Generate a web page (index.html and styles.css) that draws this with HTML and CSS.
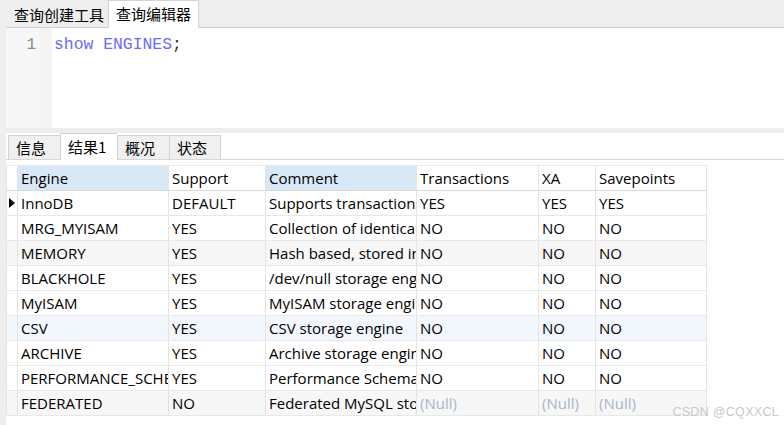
FILE: index.html
```html
<!DOCTYPE html>
<html lang="zh">
<head>
<meta charset="utf-8">
<link rel="stylesheet" href="styles.css">
</head>
<body>
<div class="app">
  <div class="qtabs">
    <div class="qtab">查询创建工具</div>
    <div class="qtab active">查询编辑器</div>
  </div>
  <div class="editor">
    <div class="gutter"><span class="ln">1</span></div>
    <div class="fold"></div>
    <div class="code"><span class="kw">show ENGINES</span><span class="punc">;</span></div>
  </div>
  <div class="split"></div>
  <div class="rtabs">
    <div class="rtab">信息</div>
    <div class="rtab active">结果1</div>
    <div class="rtab">概况</div>
    <div class="rtab">状态</div>
  </div>
  <div class="gridwrap">
    <table class="grid">
      <colgroup>
        <col class="c-ind"><col class="c-eng"><col class="c-sup"><col class="c-com"><col class="c-tra"><col class="c-xa"><col class="c-sav">
      </colgroup>
      <thead>
        <tr><th class="ind"></th><th class="sel">Engine</th><th>Support</th><th class="sel">Comment</th><th>Transactions</th><th>XA</th><th>Savepoints</th></tr>
      </thead>
      <tbody>
        <tr><td class="ind"><span class="arrow"></span></td><td>InnoDB</td><td>DEFAULT</td><td>Supports transactions, row-level locking, and foreign keys</td><td>YES</td><td>YES</td><td>YES</td></tr>
        <tr><td class="ind"></td><td>MRG_MYISAM</td><td>YES</td><td>Collection of identical MyISAM tables</td><td>NO</td><td>NO</td><td>NO</td></tr>
        <tr class="gray"><td class="ind"></td><td>MEMORY</td><td>YES</td><td>Hash based, stored in memory, useful for temporary tables</td><td>NO</td><td>NO</td><td>NO</td></tr>
        <tr><td class="ind"></td><td>BLACKHOLE</td><td>YES</td><td>/dev/null storage engine (anything you write to it disappears)</td><td>NO</td><td>NO</td><td>NO</td></tr>
        <tr><td class="ind"></td><td>MyISAM</td><td>YES</td><td>MyISAM storage engine</td><td>NO</td><td>NO</td><td>NO</td></tr>
        <tr class="blue"><td class="ind"></td><td>CSV</td><td>YES</td><td>CSV storage engine</td><td>NO</td><td>NO</td><td>NO</td></tr>
        <tr><td class="ind"></td><td>ARCHIVE</td><td>YES</td><td>Archive storage engine</td><td>NO</td><td>NO</td><td>NO</td></tr>
        <tr><td class="ind"></td><td>PERFORMANCE_SCHEMA</td><td>YES</td><td>Performance Schema</td><td>NO</td><td>NO</td><td>NO</td></tr>
        <tr class="gray"><td class="ind"></td><td>FEDERATED</td><td>NO</td><td>Federated MySQL storage engine</td><td class="null">(Null)</td><td class="null">(Null)</td><td class="null">(Null)</td></tr>
      </tbody>
    </table>
  </div>
  <div class="watermark">CSDN @CQXXCL</div>
</div>
</body>
</html>
```
FILE: styles.css
```css
html, body {
  margin: 0;
  padding: 0;
  background: #ffffff;
}
.app {
  position: relative;
  width: 784px;
  height: 425px;
  overflow: hidden;
  font-family: "Open Sans", "Noto Sans CJK SC", sans-serif;
  font-size: 15px;
  color: #000;
  background: #fff;
  border-left: 6px solid #eeeeee;
  box-sizing: border-box;
}
.qtabs {
  display: flex;
  align-items: flex-end;
  height: 28px;
  background: #eeeeee;
  margin-left: -6px;
  padding-left: 8px;
  border-bottom: 1px solid #cfcfcf;
  box-sizing: border-box;
}
.qtab {
  height: 24px;
  line-height: 24px;
  padding: 0 4px 0 6px;
  font-family: "Noto Sans CJK SC", sans-serif;
  font-size: 15px;
  color: #000;
  box-sizing: border-box;
}
.qtab.active {
  height: 28px;
  line-height: 26px;
  background: #ffffff;
  border: 1px solid #d4d4d4;
  border-bottom: none;
  padding: 0 7px 0 7px;
  margin-bottom: -1px;
}
.editor {
  display: flex;
  height: 100px;
}
.gutter {
  width: 34px;
  background: #f7f7f7;
  display: flex;
  justify-content: flex-end;
  padding-right: 4px;
  box-sizing: border-box;
}
.ln {
  font-family: "Liberation Mono", monospace;
  font-size: 16px;
  color: #8a8a8a;
  line-height: 20px;
  margin-top: 7px;
}
.fold {
  width: 12px;
  background-color: #fafafa;
  background-image: radial-gradient(#ececec 0.6px, transparent 0.8px);
  background-size: 2px 2px;
}
.code {
  padding-left: 2px;
  font-family: "Liberation Mono", monospace;
  font-size: 16.4px;
  line-height: 20px;
  margin-top: 7px;
}
.kw { color: #6a6af5; }
.punc { color: #333; }
.split {
  height: 5px;
  background: #eeeeee;
  margin-left: -6px;
}
.rtabs {
  display: flex;
  align-items: flex-end;
  height: 27px;
  padding-left: 2px;
  border-bottom: 1px solid #d8d8d8;
  box-sizing: border-box;
}
.rtab {
  height: 24px;
  line-height: 23px;
  padding-left: 7px;
  background: #f0f0f0;
  border: 1px solid #d4d4d4;
  border-bottom: none;
  border-right: none;
  font-family: "Noto Sans CJK SC", sans-serif;
  font-size: 15px;
  box-sizing: border-box;
  width: 52px;
}
.rtab:nth-child(4) { border-right: 1px solid #d4d4d4; }
.rtab.active {
  width: 57px;
  height: 27px;
  line-height: 26px;
  background: #ffffff;
  margin-bottom: -1px;
  padding-left: 7px;
}
.gridwrap {
  padding-top: 5px;
}
.grid {
  border-collapse: collapse;
  table-layout: fixed;
  width: 700px;
}
.c-ind { width: 11px; }
.c-eng { width: 151px; }
.c-sup { width: 97px; }
.c-com { width: 151px; }
.c-tra { width: 122px; }
.c-xa { width: 57px; }
.c-sav { width: 111px; }
.grid th, .grid td {
  height: 25px;
  padding: 1px 0 0 3px;
  border-right: 1px solid #e4e4e4;
  border-bottom: 1px solid #e8e8e8;
  white-space: nowrap;
  overflow: hidden;
  text-overflow: clip;
  text-align: left;
  font-weight: normal;
  line-height: 23px;
  box-sizing: border-box;
}
.grid th {
  border-bottom: 1px solid #dadada;
  border-top: 1px solid #e8e8e8;
}
.grid th.sel { background: #d9e8f6; }
.grid .ind {
  padding: 0;
  border-left: 1px solid #e4e4e4;
}
.arrow {
  display: block;
  width: 0;
  height: 0;
  margin-left: 2px;
  border-top: 5px solid transparent;
  border-bottom: 5px solid transparent;
  border-left: 6px solid #000;
}
tr.gray td { background: #f7f7f7; }
tr.blue td { background: #f2f7fd; }
.grid td.null { color: #a8b4cc; }
.watermark {
  position: absolute;
  right: 5px;
  bottom: 6px;
  font-family: "Liberation Sans", sans-serif;
  font-size: 12.5px;
  color: #c8c8c8;
  letter-spacing: 0.3px;
}
```
